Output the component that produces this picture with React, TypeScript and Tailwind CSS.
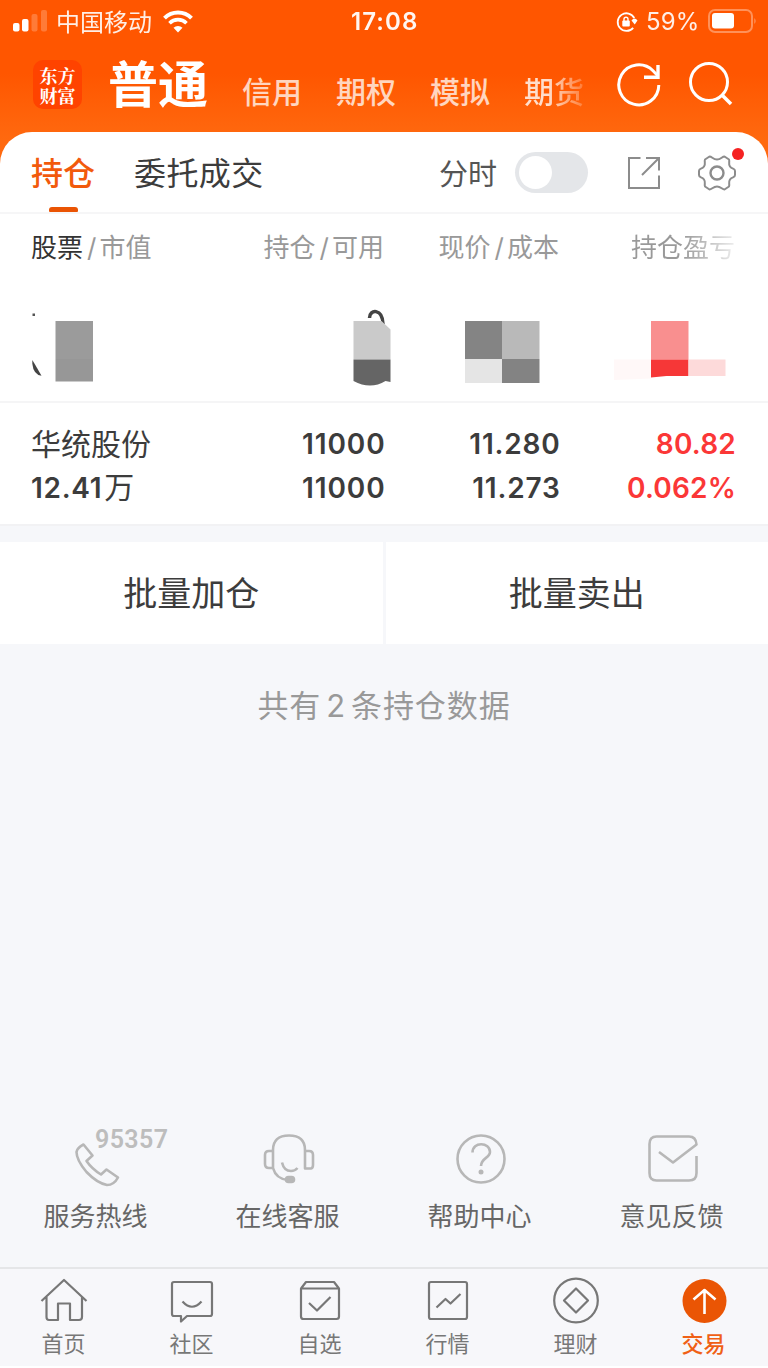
import type { ReactNode } from "react";
import clsx from "clsx";

const MARKETS = ["信用", "期权", "模拟"];

function StatusBar() {
  return (
    <div className="flex h-11 items-center pr-3 pl-[13px] text-white">
      <svg width="36" height="24" viewBox="0 0 36 24" fill="currentColor">
        <rect x="0" y="13" width="6.500" height="8.500" rx="2" />
        <rect x="9" y="9" width="6.500" height="12.500" rx="2" />
        <rect x="18.500" y="4" width="6" height="17.500" rx="2" opacity="0.22" />
        <rect x="28" y="0" width="6" height="21.500" rx="2" opacity="0.22" />
      </svg>
      <span className="mt-0.5 ml-[7px] w-[97px] text-2xl leading-6 whitespace-nowrap opacity-90">中国移动</span>
      <svg className="-mt-0.5 ml-2.5" width="30" height="24" viewBox="0 0 30 24" fill="none" stroke="currentColor">
        <path d="M1.500 9.200a19 19 0 0 1 27 0" strokeWidth="4" />
        <path d="M6.500 14.200a12 12 0 0 1 17 0" strokeWidth="3.600" />
        <path d="M15 23.500l-4.500-4.700a6.500 6.500 0 0 1 9 0z" fill="currentColor" stroke="none" />
      </svg>
      <span className="ml-[158px] w-[68px] text-2xl leading-6 font-semibold tracking-[1.1px] whitespace-nowrap opacity-95">17:08</span>
      <svg className="ml-auto" width="22" height="22" viewBox="0 0 22 22" fill="none" stroke="currentColor" strokeWidth="1.800">
        <path d="M17.200 16.800A8.800 8.800 0 1 1 18.300 7" />
        <path d="M15.500 9.500q3-4 6 0l-2.800 4z" fill="currentColor" stroke="none" />
        <rect x="6.300" y="9.500" width="7.500" height="6" rx="1" fill="currentColor" stroke="none" />
        <path d="M8 10V8.300a2 2 0 0 1 4 0V10" strokeWidth="1.400" />
      </svg>
      <span className="ml-2 w-[55px] text-2xl leading-6 tracking-[0.1px] whitespace-nowrap opacity-90">59%</span>
      <svg className="-mt-0.5 ml-[7px]" width="48" height="24" viewBox="0 0 48 24" fill="none">
        <rect x="1" y="1" width="43" height="22" rx="6" stroke="currentColor" strokeWidth="2" opacity="0.35" />
        <rect x="4" y="4" width="22" height="15.500" rx="3" fill="currentColor" />
        <path d="M46.500 9q2 3 0 6z" fill="currentColor" opacity="0.5" />
      </svg>
    </div>
  );
}

function Header() {
  return (
    <header className="h-[164px] bg-linear-to-b from-[#ff5600] from-45% to-[#ff690f] to-85%">
      <StatusBar />
      <div className="flex h-[87px] pl-[33px] text-white">
        <div className="mt-4 flex h-[49px] w-[49px] flex-col items-center justify-center rounded-[10px] bg-[#ff4300]">
          <span className="w-[36px] font-['Noto_Serif_CJK_SC','Noto_Sans_CJK_SC',serif] text-[18px] leading-5 font-bold break-all">
            东方财富
          </span>
        </div>
        <span className="mt-[15px] ml-[26px] w-[100px] text-[50px] leading-[52px] font-bold whitespace-nowrap">普通</span>
        <div className="mt-[33px] ml-[34px] flex w-[350px] gap-[34px] text-[30px] leading-[31px] font-medium text-white/75">
          {MARKETS.map((m) => (
            <span key={m} className="w-[60px] shrink-0 whitespace-nowrap">
              {m}
            </span>
          ))}
          <span className="w-[60px] shrink-0 bg-linear-to-r from-white/80 from-40% to-white/20 bg-clip-text whitespace-nowrap text-transparent">
            期货
          </span>
        </div>
        <svg className="mt-[18px] ml-[25px]" width="46" height="46" viewBox="0 0 46 46" fill="none" stroke="currentColor" strokeWidth="3">
          <path d="M41.800 23A20 20 0 1 1 36 8.800L41 14" />
          <path d="M41 3v12.300H27" strokeWidth="3.400" />
        </svg>
        <svg className="mt-[18px] ml-[26px]" width="46" height="46" viewBox="0 0 46 46" fill="none" stroke="currentColor" strokeWidth="3">
          <circle cx="20" cy="20" r="18.500" />
          <path d="M33 33l9 9" strokeWidth="3.500" />
        </svg>
      </div>
    </header>
  );
}

function PositionTabs() {
  return (
    <div className="flex h-[82px] border-b-2 border-[#f6f6f7] pl-[31px] text-[32px]">
      <div className="flex w-16 flex-col items-center">
        <span className="mt-[24px] leading-9 font-medium whitespace-nowrap text-[#f25a0c]">持仓</span>
        <span className="mt-[15px] h-[5px] w-[29px] rounded-t-[3px] rounded-b-[1px] bg-[#ea5404]" />
      </div>
      <span className="mt-[24px] ml-[39px] w-[260px] leading-9 tracking-[0.4px] whitespace-nowrap">委托成交</span>
      <span className="mt-[27px] ml-[45px] w-[60px] text-[29px] leading-8 whitespace-nowrap text-[#555]">分时</span>
      <div className="mt-5 ml-4 h-[41px] w-[73px] rounded-full bg-[#e4e6e9] p-1">
        <div className="h-[33px] w-[33px] rounded-full bg-white" />
      </div>
      <svg className="mt-[23px] ml-[38px]" width="36" height="36" viewBox="0 0 36 36" fill="none" stroke="#8c8c8c" strokeWidth="2">
        <path d="M14.500 3H3v30h30V20.500M20 3h13v12.500M33 3L16 20" />
      </svg>
      <div className="relative mt-[21px] ml-[35px] h-10 w-10">
        <svg width="40" height="40" viewBox="0 0 40 40" fill="none" stroke="#8c8c8c" strokeWidth="2" strokeLinejoin="round">
          <circle cx="20" cy="20" r="6.500" strokeWidth="2.400" />
          <path d="M12.500 3.500C15 3.500 16 6.500 20 6.500S25 3.500 27.500 3.500L32 6.500C33 9 31 10.500 33 13.500S38 15 38 18V22C38 25 35 23.500 33 26.500S33 31 32 33.500L27.500 36.500C25 36.500 24 33.500 20 33.500S15 36.500 12.500 36.500L8 33.500C7 31 9 29.500 7 26.500S2 25 2 22V18C2 15 5 16.500 7 13.500S7 9 8 6.500Z" />
        </svg>
        <span className="absolute -top-[5px] left-[35px] h-3 w-3 rounded-full bg-[#f52222]" />
      </div>
    </div>
  );
}

const ROW = "grid grid-cols-[153px_200px_175px_176px] pl-[31px]";

function Slash() {
  return <span className="mr-[3px] ml-1">/</span>;
}

function ColumnTitles() {
  return (
    <div className={clsx(ROW, "h-[67px] pt-5 text-[26px] leading-7 whitespace-nowrap text-[#999]")}>
      <div>
        <span className="text-[#333]">股票</span>
        <Slash />
        市值
      </div>
      <div className="text-right">
        持仓
        <Slash />
        可用
      </div>
      <div className="text-right">
        现价
        <Slash />
        成本
      </div>
      <div className="bg-linear-to-r from-[#999] from-70% to-[#ededed] bg-clip-text text-right text-transparent">持仓盈亏</div>
    </div>
  );
}

// First holding is hidden behind a coarse mosaic
function MaskedRow() {
  return (
    <div className={clsx(ROW, "h-[122px] border-b-2 border-[#f5f5f6]")}>
      <svg width="153" height="120" viewBox="31 281 153 120">
        <rect x="32.500" y="313.500" width="2.500" height="2.500" fill="#555" />
        <path d="M32.300 360q2.500 4 9.200 15.800q-8-1-9.200-12z" fill="#444" />
        <rect x="55.500" y="321" width="37.500" height="38" fill="#9b9b9b" />
        <rect x="55.500" y="359" width="37.500" height="22.500" fill="#979797" />
      </svg>
      <svg width="216" height="120" viewBox="184 281 216 120">
        <path d="M369.500 318c0-9 13-10 13.500 6" fill="none" stroke="#444" strokeWidth="3.500" />
        <path d="M353.500 321h28l9 8.500v30h-37z" fill="#cacaca" />
        <path d="M353.500 359.500h37V382l-5-1q-15 9-32 0z" fill="#656565" />
      </svg>
      <svg width="175" height="120" viewBox="384 281 175 120">
        <rect x="465" y="321" width="37" height="38" fill="#848484" />
        <rect x="502" y="321" width="37.500" height="38" fill="#b9b9b9" />
        <rect x="465" y="359" width="37" height="24" fill="#e5e5e5" />
        <rect x="502" y="359" width="37.500" height="24" fill="#838383" />
      </svg>
      <svg width="176" height="120" viewBox="559 281 176 120">
        <rect x="651" y="321" width="37.500" height="38.500" fill="#f98f8f" />
        <path d="M614 359.500h37v19l-37 1.500z" fill="#fff8f8" />
        <path d="M651 359.500h37.500v16.500h-22l-15.500 1.500z" fill="#f63737" />
        <rect x="688.500" y="359.500" width="37" height="16.500" fill="#fddada" />
      </svg>
    </div>
  );
}

function HoldingRow() {
  return (
    <div className={clsx(ROW, "h-[123px] border-b-2 border-[#f2f2f4] pt-[19px] text-[28px] leading-[44px] font-semibold whitespace-nowrap")}>
      <div>
        <div className="text-[30px] font-normal">华统股份</div>
        <div className="-mt-px tracking-[0.7px]">
          12.41<span className="ml-0.5 text-[30px] font-normal">万</span>
        </div>
      </div>
      <div className="-mr-[1.500px] text-right tracking-[0.9px]">
        <div>11000</div>
        <div>11000</div>
      </div>
      <div className="-mr-[1.500px] text-right tracking-[0.8px]">
        <div>11.280</div>
        <div>11.273</div>
      </div>
      <div className="-mr-[1px] text-right tracking-[0.2px] text-[#fb3737]">
        <div>80.82</div>
        <div>0.062%</div>
      </div>
    </div>
  );
}

function PhoneIcon() {
  return (
    <svg width="50" height="50" viewBox="0 0 50 50">
      <path d="M4.500 18Q5 14 11.500 10.500L20.500 21.500L14.500 27Q20 35 29 40.500L34.500 35.500L46 43.500Q42 51 35 51Q25 49 14.500 38Q4.500 26 4.500 18Z" />
    </svg>
  );
}

const SERVICES: { label: string; icon: ReactNode; hotline?: string }[] = [
  { label: "服务热线", icon: <PhoneIcon />, hotline: "95357" },
  {
    label: "在线客服",
    icon: (
      <svg width="50" height="50" viewBox="0 0 50 50">
        <path d="M9 17V16Q9 1.500 25 1.500T41 16V34.500H47Q49 34 49 31V21Q49 17 45 17H41M9 17H5Q1 17 1 21V30Q1 34 5 34H9V17M9 34Q12 45 24 46M18 28.500Q20 37 27 37Q31 37 33.500 34" />
        <rect x="22" y="43" width="8" height="5" rx="2.500" fill="currentColor" />
      </svg>
    ),
  },
  {
    label: "帮助中心",
    icon: (
      <svg width="50" height="50" viewBox="0 0 50 50">
        <circle cx="25" cy="25" r="23.500" />
        <path d="M16.500 18.500C16.500 7 34 8 34 18C34 24 25 24 25 32" />
        <circle cx="25" cy="38" r="2.500" fill="currentColor" stroke="none" />
      </svg>
    ),
  },
  {
    label: "意见反馈",
    icon: (
      <svg width="50" height="50" viewBox="0 0 50 50">
        <path d="M48.500 22V39Q48.500 46.500 41 46.500H8.500Q1.500 46.500 1.500 39V10Q1.500 2.500 8.500 2.500H41Q48 2.500 48.500 10.500L25 28.500L11 18" />
      </svg>
    ),
  },
];

function Services() {
  return (
    <div className="mt-auto grid h-[134px] grid-cols-4">
      {SERVICES.map((s) => (
        <div key={s.label} className="relative flex flex-col items-center">
          <div className="mt-px fill-none stroke-[#b7b7b7] stroke-[2.6px] pl-px text-[#b7b7b7] [stroke-linejoin:round] [&>svg]:overflow-visible">
            {s.icon}
          </div>
          <span className="mt-[19px] -ml-px text-[26px] leading-7 whitespace-nowrap text-[#666]">{s.label}</span>
          {s.hotline && (
            <span className="absolute -top-[5px] left-[95px] font-['Roboto',sans-serif] text-[25px] leading-6 font-semibold tracking-[0.4px] text-[#bdbdbd]">
              {s.hotline}
            </span>
          )}
        </div>
      ))}
    </div>
  );
}

const TABS: { label: string; icon: ReactNode; active?: boolean }[] = [
  { label: "首页", icon: <path d="M1.500 23L24 2L46.500 23M6.500 18.500V39Q6.500 42 9 42H18V25.500H30V42H39Q42 42 42 39V18.500" /> },
  { label: "社区", icon: <path d="M6 4H42Q44 4 44 6V36Q44 38 42 38H19L13 43.500V38H6Q4 38 4 36V6Q4 4 6 4ZM14.500 23.500Q24 34 33.500 23.500" /> },
  { label: "自选", icon: <path d="M5 10.500L10 4H38L43 10.500M5 10.500H43V38.500Q43 41 40.500 41H7.500Q5 41 5 38.500ZM13 25L21 32.500L34.500 19" /> },
  { label: "行情", icon: <path d="M7 4H41Q43 4 43 6V39Q43 41 41 41H7Q5 41 5 39V6Q5 4 7 4ZM12.500 29.500L21.500 21L26.500 25.500L36.500 16" /> },
  {
    label: "理财",
    icon: (
      <>
        <circle cx="24" cy="22.500" r="21.800" />
        <path d="M24 10.500L36 22.500L24 34.500L12 22.500Z" />
      </>
    ),
  },
  {
    label: "交易",
    active: true,
    icon: (
      <>
        <circle cx="24.500" cy="23" r="22" fill="#ea5504" stroke="none" />
        <path d="M24.500 36V12M13.500 21.500L24.500 12L35.500 21.500" stroke="white" strokeWidth="2.600" />
      </>
    ),
  },
];

function TabBar() {
  return (
    <nav className="grid h-[99px] grid-cols-6 border-t-2 border-[#e5e6e8] bg-[#f7f7fa]">
      {TABS.map((t) => (
        <div key={t.label} className={clsx("flex flex-col items-center pt-[9px]", t.active ? "font-medium text-[#f06015]" : "text-[#777]")}>
          <svg className="overflow-visible" width="48" height="46" viewBox="0 0 48 46" fill="none" stroke="currentColor" strokeWidth="2.200" strokeLinejoin="round">
            {t.icon}
          </svg>
          <span className="mt-2 -ml-px text-[22px] leading-6 whitespace-nowrap">{t.label}</span>
        </div>
      ))}
    </nav>
  );
}

export default function App() {
  return (
    <div className="w-[768px] bg-white pb-0.5">
      <div className="flex h-[1366px] flex-col overflow-hidden bg-[#f6f7fa] font-['Inter','Noto_Sans_CJK_SC',sans-serif] text-[#3c3c3c]">
        <Header />
        <main className="relative -mt-8 rounded-t-[32px] bg-white">
          <PositionTabs />
          <ColumnTitles />
          <MaskedRow />
          <HoldingRow />
        </main>
        <div className="mt-4 grid h-[102px] shrink-0 grid-cols-2 gap-[3px] text-center text-[34px] leading-[100px]">
          <button className="bg-white pt-0.5">批量加仓</button>
          <button className="bg-white pt-0.5">批量卖出</button>
        </div>
        <p className="mt-[46px] text-center text-[31px] leading-8 tracking-[0.9px] text-[#999]">
          共有<span className="mx-[5px]">2</span>条持仓数据
        </p>
        <Services />
        <TabBar />
      </div>
    </div>
  );
}
